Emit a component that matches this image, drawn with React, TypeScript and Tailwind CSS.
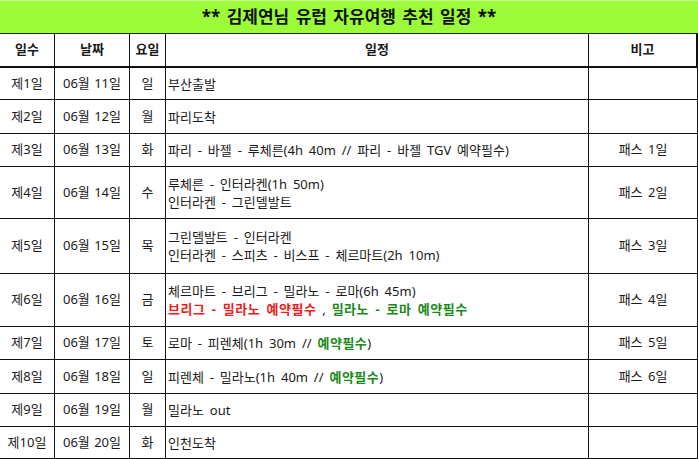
import React from "react";

type Seg = { t: string; c?: "red" | "green" | "plain" };
type Row = {
  h: string;
  day: string;
  date: string;
  dow: string;
  lines: Seg[][];
  note: string;
};

const rows: Row[] = [
  { h: "h-[32px]", day: "제1일", date: "06월 11일", dow: "일", lines: [[{ t: "부산출발" }]], note: "" },
  { h: "h-[34px]", day: "제2일", date: "06월 12일", dow: "월", lines: [[{ t: "파리도착" }]], note: "" },
  {
    h: "h-[33px]",
    day: "제3일",
    date: "06월 13일",
    dow: "화",
    lines: [[{ t: "파리 - 바젤 - 루체른(4h 40m // 파리 - 바젤 TGV 예약필수)" }]],
    note: "패스 1일",
  },
  {
    h: "h-[52px]",
    day: "제4일",
    date: "06월 14일",
    dow: "수",
    lines: [[{ t: "루체른 - 인터라켄(1h 50m)" }], [{ t: "인터라켄 - 그린델발트" }]],
    note: "패스 2일",
  },
  {
    h: "h-[55px]",
    day: "제5일",
    date: "06월 15일",
    dow: "목",
    lines: [[{ t: "그린델발트 - 인터라켄" }], [{ t: "인터라켄 - 스피츠 - 비스프 - 체르마트(2h 10m)" }]],
    note: "패스 3일",
  },
  {
    h: "h-[53px]",
    day: "제6일",
    date: "06월 16일",
    dow: "금",
    lines: [
      [{ t: "체르마트 - 브리그 - 밀라노 - 로마(6h 45m)" }],
      [
        { t: "브리그 - 밀라노 예약필수", c: "red" },
        { t: " , " },
        { t: "밀라노 - 로마 예약필수", c: "green" },
      ],
    ],
    note: "패스 4일",
  },
  {
    h: "h-[33px]",
    day: "제7일",
    date: "06월 17일",
    dow: "토",
    lines: [[{ t: "로마 - 피렌체(1h 30m // " }, { t: "예약필수", c: "green" }, { t: ")" }]],
    note: "패스 5일",
  },
  {
    h: "h-[34px]",
    day: "제8일",
    date: "06월 18일",
    dow: "일",
    lines: [[{ t: "피렌체 - 밀라노(1h 40m // " }, { t: "예약필수", c: "green" }, { t: ")" }]],
    note: "패스 6일",
  },
  { h: "h-[33px]", day: "제9일", date: "06월 19일", dow: "월", lines: [[{ t: "밀라노 out" }]], note: "" },
  { h: "h-[32px]", day: "제10일", date: "06월 20일", dow: "화", lines: [[{ t: "인천도착" }]], note: "" },
];

const cols = "grid grid-cols-[55px_75px_36px_423px_109px]";

function SegView({ s }: { s: Seg }) {
  if (s.c === "red") return <span className="font-bold text-[#ee1c1c] tracking-[0.5px]">{s.t}</span>;
  if (s.c === "green") return <span className="font-bold text-[#1a8a1a] tracking-[0.5px]">{s.t}</span>;
  return <span>{s.t}</span>;
}

export default function App() {
  return (
    <div
      className="w-[698px] h-[459px] bg-white text-[13px] text-[#1a1a1a] overflow-hidden"
      style={{ fontFamily: '"Noto Sans", "Noto Sans CJK KR", sans-serif' }}
    >
      <div className="h-[34px] bg-[#9cfc3a] border-b border-[#222] border-t border-t-[#c8fd90] flex items-center justify-center">
        <span className="font-bold text-[17px] text-[#111] [word-spacing:2px] pb-[1px]">** 김제연님 유럽 자유여행 추천 일정 **</span>
      </div>
      <div className={`${cols} h-[34px] font-bold text-[13px]`}>
        <div className="border-r border-b-2 border-[#111] flex items-center justify-center">일수</div>
        <div className="border-r border-b-2 border-[#111] flex items-center justify-center">날짜</div>
        <div className="border-r border-b-2 border-[#111] flex items-center justify-center">요일</div>
        <div className="border-r border-b-2 border-[#111] flex items-center justify-center">일정</div>
        <div className="border-r-2 border-b-2 border-[#111] flex items-center justify-center">비고</div>
      </div>
      {rows.map((r) => (
        <div key={r.day} className={`${cols} ${r.h}`}>
          <div className="border-r border-b border-[#111] flex items-center justify-center">{r.day}</div>
          <div className="border-r border-b border-[#111] flex items-center justify-center [word-spacing:1px]">{r.date}</div>
          <div className="border-r border-b border-[#111] flex items-center justify-center">{r.dow}</div>
          <div className="border-r border-b border-[#111] flex flex-col justify-center pl-[2px] leading-[18px] whitespace-nowrap [word-spacing:2.5px]">
            {r.lines.map((ln, i) => (
              <div key={i}>
                {ln.map((s, j) => (
                  <SegView key={j} s={s} />
                ))}
              </div>
            ))}
          </div>
          <div className="border-r border-b border-[#111] flex items-center justify-center [word-spacing:2px]">{r.note}</div>
        </div>
      ))}
    </div>
  );
}
